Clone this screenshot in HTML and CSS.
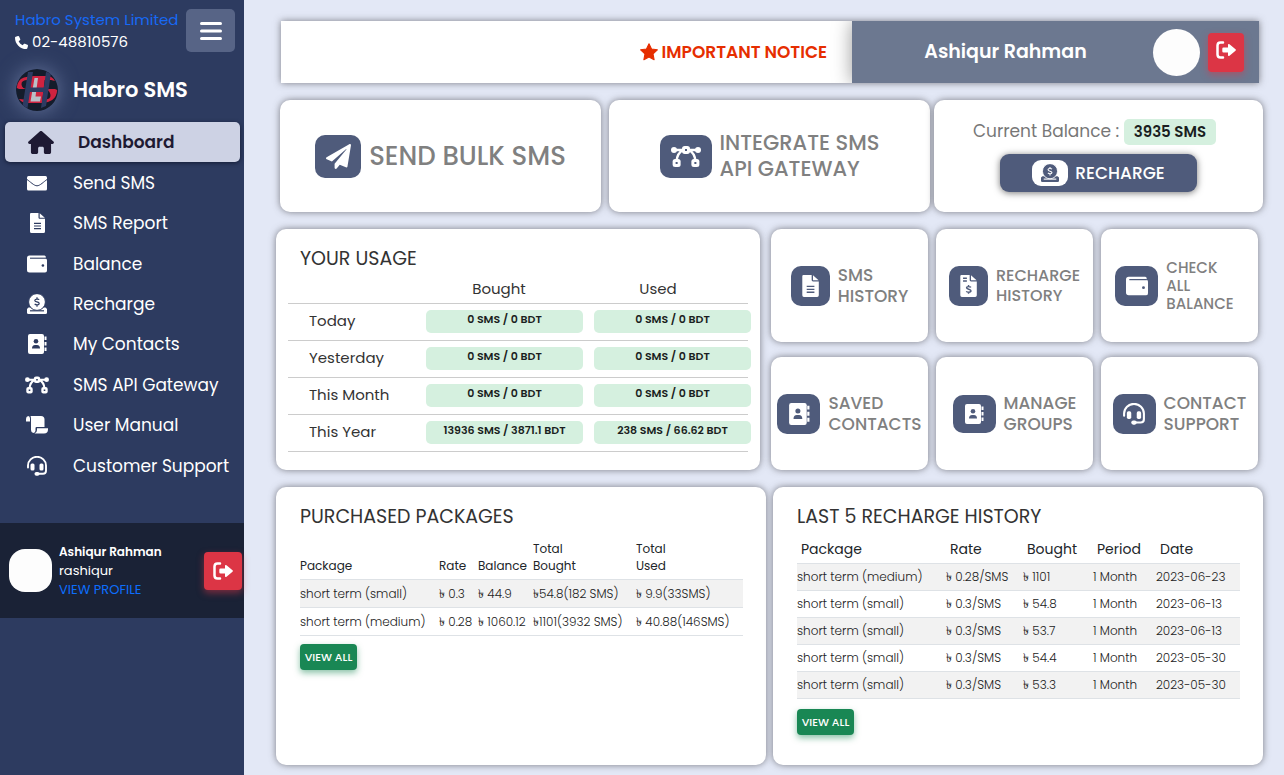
FILE: index.html
```html
<!DOCTYPE html>
<html lang="en">
<head>
<meta charset="utf-8">
<meta name="viewport" content="width=device-width, initial-scale=1">
<title>Habro SMS Dashboard</title>
<link rel="stylesheet" href="styles.css">
</head>
<body>
<svg class="sprite" aria-hidden="true">
  <symbol id="phone" viewBox="0 0 512 512"><path d="M164.900 24.600c-7.700-18.600-28-28.500-47.400-23.200l-88 24C12.100 30.200 0 46 0 64C0 311.400 200.600 512 448 512c18 0 33.800-12.100 38.600-29.500l24-88c5.300-19.400-4.600-39.700-23.200-47.400l-96-40c-16.300-6.800-35.200-2.100-46.300 11.600L304.700 368C234.300 334.700 177.300 277.700 144 207.300L193.300 167c13.700-11.200 18.400-30 11.600-46.300l-40-96z"/></symbol>
  <symbol id="bars" viewBox="0 0 22 20"><path d="M1.500 2.500h19M1.500 10h19M1.500 17.500h19" fill="none" stroke="currentColor" stroke-width="3" stroke-linecap="round"/></symbol>
  <symbol id="house" viewBox="0 0 576 512"><path d="M575.800 255.500c0 18-15 32.100-32 32.100h-32l.7 160.200c0 2.700-.2 5.400-.5 8.100V472c0 22.100-17.900 40-40 40H392c-22.100 0-40-17.900-40-40V384c0-17.700-14.300-32-32-32H256c-17.700 0-32 14.300-32 32v88c0 22.100-17.900 40-40 40H104c-22.100 0-40-17.900-40-40V287.600H32c-18 0-32-14-32-32.100c0-9 3-17 10-24L266.400 8c7-7 15-8 22-8s15 2 21 7L564.800 231.500c8 7 12 15 11 24z"/></symbol>
  <symbol id="mail" viewBox="0 0 20 20"><rect x="0" y="3" width="20" height="14.500" rx="1.500"/><path class="cut" d="M0 6.500c3 2 7 6.300 10 6.300S17 8.500 20 6.500" stroke-width="1"/></symbol>
  <symbol id="file" viewBox="0 0 20 20"><path d="M4 0h7.500v4.500c0 .8.5 1.300 1.300 1.300H18V18.500a1.500 1.500 0 0 1-1.500 1.500h-12A1.500 1.500 0 0 1 3 18.500V1.200Q3 0 4 0z"/><path d="M12.700.2 17.800 4.800h-5.100z"/><path class="cut" d="M7 10.300h7M7 13h7M7 15.700h7" stroke-width="1.200"/></symbol>
  <symbol id="invoice" viewBox="0 0 20 20"><path d="M4 0h7.500v4.500c0 .8.5 1.300 1.300 1.300H18V18.500a1.500 1.500 0 0 1-1.500 1.500h-12A1.500 1.500 0 0 1 3 18.500V1.200Q3 0 4 0z"/><path d="M12.700.2 17.800 4.800h-5.100z"/><path class="cut" d="M5.500 3h3.500M5.500 5.500h3.500M10.500 9v1.500m0 5v1.500M12.700 11.200c-.5-.7-4-1.200-4 .5 0 1.600 4 1 4 2.700 0 1.700-3.700 1.400-4.200.4" stroke-width="1.300"/></symbol>
  <symbol id="wallet" viewBox="0 0 20 20"><path d="M2.500 1.500h15a1.500 1.500 0 0 1 1.300 1.300v1.600q1.200.4 1.200 1.800v10.300q0 2-2 2H2.500q-2.500 0-2.500-2.500V4q0-2.500 2.500-2.500z"/><path class="cut" d="M3 4.200h16" stroke-width="1.100"/><circle class="hole" cx="15.900" cy="11.500" r="1.300"/></symbol>
  <symbol id="donate" viewBox="0 0 20 20"><path d="M1.500 13.500h17l1.500 1.500v3.500q0 1.500-1.500 1.500h-17Q0 20 0 18.500V15z"/><path class="cut" d="M3 16.800h14" stroke-width="1.200"/><circle class="cut-ring" cx="10" cy="8" r="8.400"/><path class="cut" d="M10 3.200v1.400m0 6.800v1.400M12.200 5.700c-.9-1-4.400-.9-4.400.8 0 1.900 4.400 1 4.400 3 0 1.900-3.600 1.700-4.500.4" stroke-width="1.200"/></symbol>
  <symbol id="book" viewBox="0 0 20 20"><rect x="1" y="0" width="16" height="20" rx="2"/><path d="M18.500 2.500v3.500M18.500 8v3.500M18.500 13.500v3.500" fill="none" stroke="currentColor" stroke-width="2"/><circle class="hole" cx="9" cy="7.200" r="2.300"/><path class="hole" d="M5 14.500q0-3.500 3-3.500h2q3 0 3 3.500z"/></symbol>
  <symbol id="bezier" viewBox="0 0 24 18"><path d="M2.500 3.700h19M9.500 4C6.500 5.500 4.800 9 4.500 12.500M14.500 4c3 1.500 4.700 5 5 8.500" fill="none" stroke="currentColor" stroke-width="2"/><circle cx="2.400" cy="3.700" r="2.400"/><circle cx="21.600" cy="3.700" r="2.400"/><rect x="8.800" y="0.500" width="6.400" height="6.400" rx="2.200"/><rect x="1.300" y="11" width="6.400" height="6.400" rx="2"/><rect x="16.300" y="11" width="6.400" height="6.400" rx="2"/><path class="hole" d="M11.200 2.900h1.600v1.600h-1.600zM3.700 13.400h1.600v1.600H3.700zM18.700 13.400h1.600v1.600h-1.600z"/></symbol>
  <symbol id="scroll" viewBox="-1 -1 24 20"><path d="M2.200 0Q0 .3 0 3v2.500h4V2.500Q4 .3 2.200 0zM4.500 0H15q3.500 0 3.500 3.500V11H10.500q-1 0-1 1.200v2.300q0 2-2.200 2.500Q5 16.500 5 14V3Q5 1 4.500 0zM11 12.300h11v1.200q0 4-4 4H8.500q2.500-.8 2.500-3.500z"/></symbol>
  <symbol id="headset" viewBox="0 0 20 20"><path d="M1 11.500V9.500a9 8.700 0 0 1 18 0v5.200q0 3-3 3h-5" fill="none" stroke="currentColor" stroke-width="1.900" stroke-linecap="round"/><rect x="3.500" y="7.500" width="4" height="7" rx="1.500"/><rect x="12.500" y="7.500" width="4" height="7" rx="1.500"/><rect x="7.500" y="15.900" width="5" height="3.800" rx="1.900"/></symbol>
  <symbol id="plane" viewBox="0 0 512 512"><path d="M476 3.200L12.500 270.600c-18.100 10.400-15.800 35.600 2.200 43.200L121 358.400l287.300-253.200c5.500-4.900 13.300 2.600 8.600 8.300L176 407v80.500c0 23.600 28.500 32.900 42.500 15.800L282 426l124.600 52.200c14.200 6 30.400-2.900 33-18.200l72-432C515 7.800 493.300-6.800 476 3.200z"/></symbol>
  <symbol id="star" viewBox="0 0 20 20"><path d="M10 .8 12.800 6.700 19.300 7.600 14.500 12.100 15.700 18.600 10 15.500 4.300 18.600 5.500 12.100.7 7.600 7.200 6.700z" stroke="currentColor" stroke-width="1.200" stroke-linejoin="round"/></symbol>
  <symbol id="exit" viewBox="0 0 20 18"><path d="M7 1.500H4.500q-3 0-3 3v9q0 3 3 3H7" fill="none" stroke="currentColor" stroke-width="2.500" stroke-linecap="round"/><path d="M7.500 6.500h4.500V4q0-1.800 1.500-.7l6 5q.8.700 0 1.400l-6 5q-1.500 1.100-1.500-.7v-2.500H7.500q-1.200 0-1.200-1.200V7.700q0-1.200 1.200-1.200z"/></symbol>
</svg>

<aside class="sidebar">
  <div class="company">
    <div>
      <a class="company-name" href="#">Habro System Limited</a>
      <div class="company-phone"><svg class="phone-icon"><use href="#phone"/></svg>02-48810576</div>
    </div>
    <button class="menu-button" aria-label="Toggle menu"><svg><use href="#bars"/></svg></button>
  </div>
  <div class="brand">
    <svg class="logo" viewBox="0 0 42 42" aria-hidden="true">
      <circle cx="21" cy="21" r="21" fill="#141c2b"/>
      <path d="M.8 19Q1 11 8 8.500q5-1.500 10-1.500h13q5 0 8 5l-4-1H12q-7 0-6.500 4.500T12 20h-9zM41.200 21q-.5 7-5 10t-10 3H11q-5 0-8-4l5 .5h20q7 0 6.500-4.500T29 20h10z" fill="#cf2340"/>
      <path d="M14.500 8H29l-3 26H12z" fill="#cf2340"/>
      <path d="M18.500 9H22l-2.500 18.500H25l-1 5H14.500z" fill="#b9bfc8"/>
      <path d="M12 3h5l-5.500 36-5-2zM30 3l5 1-5 33-5 2zM12 18.500h20l-1 4.500H11z" fill="#2d3b62"/>
    </svg>
    <span>Habro SMS</span>
  </div>
  <nav class="nav">
    <a class="nav-item active" href="#"><svg><use href="#house"/></svg><span>Dashboard</span></a>
    <a class="nav-item" href="#"><svg><use href="#mail"/></svg><span>Send SMS</span></a>
    <a class="nav-item" href="#"><svg><use href="#file"/></svg><span>SMS Report</span></a>
    <a class="nav-item" href="#"><svg><use href="#wallet"/></svg><span>Balance</span></a>
    <a class="nav-item" href="#"><svg><use href="#donate"/></svg><span>Recharge</span></a>
    <a class="nav-item" href="#"><svg><use href="#book"/></svg><span>My Contacts</span></a>
    <a class="nav-item" href="#"><svg><use href="#bezier"/></svg><span>SMS API Gateway</span></a>
    <a class="nav-item" href="#"><svg><use href="#scroll"/></svg><span>User Manual</span></a>
    <a class="nav-item" href="#"><svg><use href="#headset"/></svg><span>Customer Support</span></a>
  </nav>
  <div class="profile">
    <div class="profile-avatar"></div>
    <div class="profile-info">
      <strong>Ashiqur Rahman</strong>
      <span>rashiqur</span>
      <a href="#">VIEW PROFILE</a>
    </div>
    <button class="logout" aria-label="Log out"><svg><use href="#exit"/></svg></button>
  </div>
</aside>

<main class="main">
  <header class="topbar">
    <a class="notice" href="#"><svg><use href="#star"/></svg>IMPORTANT NOTICE</a>
    <div class="user">
      <span class="user-name">Ashiqur Rahman</span>
      <div class="user-avatar"></div>
      <button class="logout top" aria-label="Log out"><svg><use href="#exit"/></svg></button>
    </div>
  </header>

  <section class="actions">
    <a class="card action send" href="#"><span class="tile large"><svg><use href="#plane"/></svg></span><span class="send-label">SEND BULK SMS</span></a>
    <a class="card action" href="#"><span class="tile large broad"><svg><use href="#bezier"/></svg></span><span class="api-label">INTEGRATE SMS<br>API GATEWAY</span></a>
    <div class="card balance">
      <div class="balance-line">Current Balance : <span class="balance-value">3935 SMS</span></div>
      <button class="recharge"><span class="recharge-icon"><svg><use href="#donate"/></svg></span>RECHARGE</button>
    </div>
  </section>

  <section class="overview">
    <div class="card usage">
      <h2>YOUR USAGE</h2>
      <table class="usage-table">
        <thead><tr><th></th><th>Bought</th><th>Used</th></tr></thead>
        <tbody>
          <tr><th>Today</th><td><span>0 SMS / 0 BDT</span></td><td><span>0 SMS / 0 BDT</span></td></tr>
          <tr><th>Yesterday</th><td><span>0 SMS / 0 BDT</span></td><td><span>0 SMS / 0 BDT</span></td></tr>
          <tr><th>This Month</th><td><span>0 SMS / 0 BDT</span></td><td><span>0 SMS / 0 BDT</span></td></tr>
          <tr><th>This Year</th><td><span>13936 SMS / 3871.1 BDT</span></td><td><span>238 SMS / 66.62 BDT</span></td></tr>
        </tbody>
      </table>
    </div>
    <div class="shortcuts">
      <a class="card shortcut" href="#"><span class="tile"><svg><use href="#file"/></svg></span><span>SMS<br>HISTORY</span></a>
      <a class="card shortcut medium" href="#"><span class="tile"><svg><use href="#invoice"/></svg></span><span>RECHARGE<br>HISTORY</span></a>
      <a class="card shortcut small" href="#"><span class="tile broad"><svg><use href="#wallet"/></svg></span><span>CHECK<br>ALL<br>BALANCE</span></a>
      <a class="card shortcut" href="#"><span class="tile broad"><svg><use href="#book"/></svg></span><span>SAVED<br>CONTACTS</span></a>
      <a class="card shortcut" href="#"><span class="tile broad short"><svg><use href="#book"/></svg></span><span>MANAGE<br>GROUPS</span></a>
      <a class="card shortcut" href="#"><span class="tile broad"><svg><use href="#headset"/></svg></span><span>CONTACT<br>SUPPORT</span></a>
    </div>
  </section>

  <section class="reports">
    <div class="card report">
      <h2>PURCHASED PACKAGES</h2>
      <table class="data packages">
        <colgroup><col class="p1"><col class="p2"><col class="p3"><col class="p4"><col></colgroup>
        <thead><tr><th>Package</th><th>Rate</th><th>Balance</th><th>Total<br>Bought</th><th>Total<br>Used</th></tr></thead>
        <tbody>
          <tr><td>short term (small)</td><td>৳ 0.3</td><td>৳ 44.9</td><td>৳54.8(182 SMS)</td><td>৳ 9.9(33SMS)</td></tr>
          <tr><td>short term (medium)</td><td>৳ 0.28</td><td>৳ 1060.12</td><td>৳1101(3932 SMS)</td><td>৳ 40.88(146SMS)</td></tr>
        </tbody>
      </table>
      <button class="view-all">VIEW ALL</button>
    </div>
    <div class="card report">
      <h2>LAST 5 RECHARGE HISTORY</h2>
      <table class="data history">
        <colgroup><col class="h1"><col class="h2"><col class="h3"><col class="h4"><col></colgroup>
        <thead><tr><th>Package</th><th>Rate</th><th>Bought</th><th>Period</th><th>Date</th></tr></thead>
        <tbody>
          <tr><td>short term (medium)</td><td>৳ 0.28/SMS</td><td>৳ 1101</td><td>1 Month</td><td>2023-06-23</td></tr>
          <tr><td>short term (small)</td><td>৳ 0.3/SMS</td><td>৳ 54.8</td><td>1 Month</td><td>2023-06-13</td></tr>
          <tr><td>short term (small)</td><td>৳ 0.3/SMS</td><td>৳ 53.7</td><td>1 Month</td><td>2023-06-13</td></tr>
          <tr><td>short term (small)</td><td>৳ 0.3/SMS</td><td>৳ 54.4</td><td>1 Month</td><td>2023-05-30</td></tr>
          <tr><td>short term (small)</td><td>৳ 0.3/SMS</td><td>৳ 53.3</td><td>1 Month</td><td>2023-05-30</td></tr>
        </tbody>
      </table>
      <button class="view-all">VIEW ALL</button>
    </div>
  </section>
</main>
</body>
</html>
```

FILE: styles.css
```css
* { box-sizing: border-box; }

body {
  --navy: #2d3b60;
  --slate: #4f5b7b;
  --cut: var(--navy);
  display: flex;
  min-height: 100vh;
  margin: 0;
  background: #e3e8f6;
  color: #212529;
  font-family: Poppins, Inter, "Noto Sans", sans-serif;
  font-size: 16px;
  line-height: 24px;
}

a { color: inherit; text-decoration: none; }
button { border: 0; padding: 0; font: inherit; color: #fff; cursor: pointer; }
h2 { margin: 0; font-size: 19px; font-weight: 400; line-height: 24px; color: #333; }
svg { display: block; flex: none; width: 20px; height: 20px; fill: currentColor; }
.sprite { position: absolute; width: 0; height: 0; }
.cut { fill: none; stroke: var(--cut); }
.hole { fill: var(--cut); }
.cut-ring { stroke: var(--cut); stroke-width: 1; }

/* Sidebar */
.sidebar { flex: none; width: 244px; background: var(--navy); color: #fff; }
.company { display: flex; justify-content: space-between; padding: 9px 9px 0 15px; font-size: 15px; line-height: 22px; white-space: nowrap; }
.company-phone { display: flex; align-items: center; gap: 4px; }
.company-name { color: #1769f5; }
.phone-icon { width: 13px; height: 13px; }
.menu-button { display: grid; place-items: center; width: 49px; height: 43px; border-radius: 5px; background: #576486; }
.menu-button svg { width: 22px; }
.brand { display: flex; align-items: center; gap: 15px; margin-top: 16px; padding-left: 16px; font-size: 21px; font-weight: 600; }
.logo { width: 42px; height: 42px; border-radius: 50%; box-shadow: 0 0 20px #66759c; overflow: hidden; }
.nav { display: flex; flex-direction: column; min-height: 375px; padding: 11px 4px 0 5px; }
.nav-item { display: flex; flex: 1; align-items: center; padding-left: 20px; font-size: 17px; white-space: nowrap; }
.nav-item svg { width: 24px; }
.nav-item span { margin-left: 24px; }
.nav-item.active { padding-left: 23px; border-radius: 5px; background: #cdd2e4; color: #1e1a33; font-weight: 600; box-shadow: 0 1px 4px #141c35; }
.nav-item.active svg { width: 26px; height: 23px; }
.profile { display: flex; align-items: center; height: 95px; margin-top: 37px; padding: 0 2px 0 9px; background: #1a2236; }
.profile-avatar { width: 43px; height: 43px; border-radius: 16px; background: #fdfdfd; }
.profile-info { display: flex; flex: 1; flex-direction: column; margin-left: 7px; font-size: 13px; line-height: 19px; }
.profile-info strong { font-size: 12px; font-weight: 600; }
.profile-info a { color: #0d6efd; font-size: 13px; }
.logout { display: grid; place-items: center; width: 38px; height: 38px; border-radius: 4px; background: #dc3545; box-shadow: 0 3px 7px #dc354580; }

/* Content */
.main { display: flex; flex: 1; flex-direction: column; min-width: 0; padding: 21px 21px 10px 32px; }
.card { border-radius: 10px; background: #fff; box-shadow: 0 0 7px #606068cc; }

.topbar { display: grid; grid-template-columns: 571fr 407fr; margin: 0 4px 0 5px; background: #fff; box-shadow: 0 0 7px #606068cc; overflow: hidden; }
.notice { display: flex; align-items: center; justify-content: flex-end; gap: 4px; padding-right: 25px; color: #e62e00; font-size: 17px; font-weight: 600; }
.notice svg { width: 18px; }
.user { display: flex; align-items: center; height: 62px; padding-right: 15px; background: #6c7890; color: #fff; box-shadow: 0 0 18px #0006; }
.user-name { flex: 1; padding-left: 6px; text-align: center; font-size: 19px; font-weight: 600; }
.user-avatar { width: 47px; height: 47px; margin-right: 8px; border-radius: 50%; background: #fdfdfd; }
.logout.top { width: 36px; height: 39px; padding-bottom: 4px; }

.actions { display: grid; grid-template-columns: 325fr 321fr 329fr; gap: 4px; margin: 17px 0 0 4px; min-height: 112px; }
.action, .shortcut { display: flex; align-items: center; justify-content: center; gap: 8px; color: #808080; font-weight: 500; white-space: nowrap; }
.send { margin-right: 4px; }
.send-label { font-size: 26px; }
.api-label { font-size: 21px; line-height: 26px; }
.tile { --cut: var(--slate); display: grid; flex: none; place-items: center; width: 39px; height: 40px; border-radius: 10px; background: var(--slate); color: #fff; }
.tile svg { width: 22px; height: 22px; }
.tile.broad { width: 43px; }
.tile.short { height: 38px; }
.tile.short svg { width: 20px; height: 20px; }
.tile.large { width: 46px; height: 43px; }
.tile.large svg { width: 25px; height: 25px; }
.tile.large.broad { width: 52px; }
.tile.large.broad svg { width: 30px; }
.balance { display: flex; flex-direction: column; align-items: center; padding-top: 19px; color: #777; font-size: 17px; white-space: nowrap; }
.balance-line { padding-right: 8px; }
.balance-value { display: inline-block; padding: 0 10px; border-radius: 5px; background: #d5f0df; color: #1a1e21; font-size: 15px; font-weight: 600; line-height: 26px; }
.recharge { display: flex; align-items: center; justify-content: center; gap: 7px; width: 60%; height: 38px; margin-top: 9px; border-radius: 9px; background: var(--slate); font-size: 17px; font-weight: 500; box-shadow: 0 1px 7px #0008; }
.recharge-icon { --cut: #fff; display: grid; place-items: center; width: 36px; height: 26px; border-radius: 9px; background: #fff; color: var(--slate); }
.recharge-icon svg { width: 18px; height: 18px; }

.overview { display: grid; grid-template-columns: 484fr 487fr; gap: 11px; margin: 17px 5px 0 0; }
.usage { min-height: 241px; padding: 18px 12px 0; }
.usage h2 { padding-left: 12px; }
.usage-table { width: 100%; margin-top: 4px; border-collapse: collapse; table-layout: fixed; color: #333; }
.usage-table th { padding: 0; border-bottom: 1px solid #ccc; font-weight: 400; }
.usage-table thead th { height: 28px; font-size: 15px; }
.usage-table thead th:nth-child(1) { width: 134px; }
.usage-table thead th:nth-child(2) { width: 168px; padding-right: 14px; }
.usage-table thead th:nth-child(3) { padding-right: 22px; }
.usage-table tbody th { height: 37px; padding: 0 0 2px 21px; text-align: left; font-size: 15px; }
.usage-table td { padding: 0; border-bottom: 1px solid #ccc; }
.usage-table td span { display: block; width: 157px; height: 23px; margin-left: 4px; border-radius: 5px; background: #d5f0df; color: #1a1e21; text-align: center; font-size: 11px; font-weight: 600; line-height: 19px; white-space: nowrap; }

.shortcuts { display: grid; grid-template-columns: repeat(3, 1fr); grid-auto-rows: 1fr; gap: 15px 8px; }
.shortcut { font-size: 17px; line-height: 21px; }
.shortcut.medium { font-size: 16px; line-height: 20px; }
.shortcut.small { padding-right: 10px; font-size: 15px; line-height: 18px; }

.reports { display: grid; flex: 1; grid-template-columns: 1fr 1fr; gap: 7px; margin-top: 17px; }
.report { min-height: 278px; padding: 18px 23px 12px 24px; }
.data { width: 100%; margin-top: 11px; border-collapse: collapse; table-layout: fixed; color: #222; font-size: 12px; white-space: nowrap; }
.data th { padding: 0 0 5px; text-align: left; vertical-align: bottom; font-weight: 400; line-height: 17px; color: #212529; }
.data td { height: 27px; padding: 0; border-top: 1px solid #dee2e6; border-bottom: 1px solid #dee2e6; font-weight: 300; line-height: 20px; }
.packages td { height: 28px; }
.data tbody tr:nth-child(odd) { background: #f2f2f2; }
.history { margin-top: 12px; }
.history th { padding-left: 4px; font-size: 14px; }
.p1 { width: 139px; }
.p2 { width: 39px; }
.p3 { width: 55px; }
.p4 { width: 103px; }
.h1 { width: 149px; }
.h2 { width: 77px; }
.h3 { width: 70px; }
.h4 { width: 63px; }
.view-all { width: 57px; height: 26px; margin-top: 8px; border-radius: 4px; background: #198754; font-size: 11px; font-weight: 500; box-shadow: 0 3px 6px #19875480; }
.history + .view-all { margin-top: 10px; }
```
